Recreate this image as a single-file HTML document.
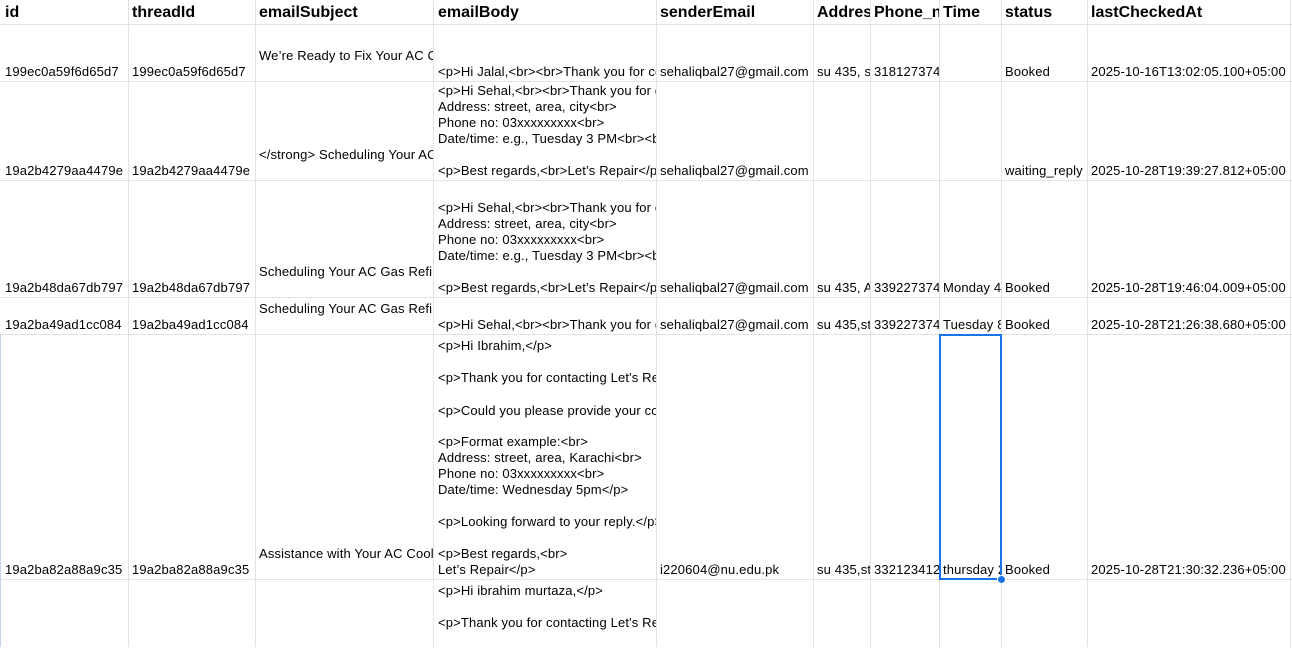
<!DOCTYPE html>
<html><head><meta charset="utf-8"><style>
*{margin:0;padding:0;box-sizing:border-box}
body{width:1292px;height:647px;background:#fff;position:relative;overflow:hidden;font-family:"Liberation Sans",Arial,sans-serif;color:#000}
.c{position:absolute;top:1px;height:647px;overflow:hidden}
.t{position:absolute;left:4px;white-space:pre;font-size:13px;line-height:16px;letter-spacing:0.15px}
.h{position:absolute;left:4px;top:2px;white-space:pre;font-size:16px;font-weight:bold;line-height:20px}
.v{position:absolute;top:0;width:1px;height:647px;background:#e2e2e2}
.r{position:absolute;left:0;width:1292px;height:1px;background:#e2e2e2}
</style></head><body>
<div class="r" style="top:24px"></div>
<div class="r" style="top:81px"></div>
<div class="r" style="top:180px"></div>
<div class="r" style="top:297px"></div>
<div class="r" style="top:334px"></div>
<div class="r" style="top:579px"></div>
<div class="v" style="left:0;top:334px;height:313px;background:#c6d4f0"></div>
<div class="v" style="left:128px"></div>
<div class="v" style="left:255px"></div>
<div class="v" style="left:433px"></div>
<div class="v" style="left:656px"></div>
<div class="v" style="left:813px"></div>
<div class="v" style="left:870px"></div>
<div class="v" style="left:939px"></div>
<div class="v" style="left:1001px"></div>
<div class="v" style="left:1087px"></div>
<div class="v" style="left:1290px"></div>

<div class="c" style="left:1px;width:127px">
<div class="h">id</div>
<div class="t" style="top:63px">199ec0a59f6d65d7</div>
<div class="t" style="top:162px">19a2b4279aa4479e</div>
<div class="t" style="top:279px">19a2b48da67db797</div>
<div class="t" style="top:316px">19a2ba49ad1cc084</div>
<div class="t" style="top:561px">19a2ba82a88a9c35</div>
</div>
<div class="c" style="left:128px;width:127px">
<div class="h">threadId</div>
<div class="t" style="top:63px">199ec0a59f6d65d7</div>
<div class="t" style="top:162px">19a2b4279aa4479e</div>
<div class="t" style="top:279px">19a2b48da67db797</div>
<div class="t" style="top:316px">19a2ba49ad1cc084</div>
<div class="t" style="top:561px">19a2ba82a88a9c35</div>
</div>
<div class="c" style="left:255px;width:178px">
<div class="h">emailSubject</div>
<div class="t" style="top:47px">We’re Ready to Fix Your AC Cooling</div>
<div class="t" style="top:146px">&lt;/strong&gt; Scheduling Your AC Gas</div>
<div class="t" style="top:263px">Scheduling Your AC Gas Refill</div>
<div class="t" style="top:300px">Scheduling Your AC Gas Refill</div>
<div class="t" style="top:545px">Assistance with Your AC Cooling</div>
</div>
<div class="c" style="left:434px;width:222px">
<div class="h">emailBody</div>
<div class="t" style="top:63px">&lt;p&gt;Hi Jalal,&lt;br&gt;&lt;br&gt;Thank you for contacting</div>
<div class="t" style="top:82px">&lt;p&gt;Hi Sehal,&lt;br&gt;&lt;br&gt;Thank you for contacting
Address: street, area, city&lt;br&gt;
Phone no: 03xxxxxxxxx&lt;br&gt;
Date/time: e.g., Tuesday 3 PM&lt;br&gt;&lt;br&gt;

&lt;p&gt;Best regards,&lt;br&gt;Let’s Repair&lt;/p&gt;</div>
<div class="t" style="top:199px">&lt;p&gt;Hi Sehal,&lt;br&gt;&lt;br&gt;Thank you for contacting
Address: street, area, city&lt;br&gt;
Phone no: 03xxxxxxxxx&lt;br&gt;
Date/time: e.g., Tuesday 3 PM&lt;br&gt;&lt;br&gt;

&lt;p&gt;Best regards,&lt;br&gt;Let’s Repair&lt;/p&gt;</div>
<div class="t" style="top:316px">&lt;p&gt;Hi Sehal,&lt;br&gt;&lt;br&gt;Thank you for contacting</div>
<div class="t" style="top:337px">&lt;p&gt;Hi Ibrahim,&lt;/p&gt;

&lt;p&gt;Thank you for contacting Let's Repair</div>
<div class="t" style="top:402px">&lt;p&gt;Could you please provide your contact</div>
<div class="t" style="top:433px">&lt;p&gt;Format example:&lt;br&gt;
Address: street, area, Karachi&lt;br&gt;
Phone no: 03xxxxxxxxx&lt;br&gt;
Date/time: Wednesday 5pm&lt;/p&gt;

&lt;p&gt;Looking forward to your reply.&lt;/p&gt;

&lt;p&gt;Best regards,&lt;br&gt;
Let’s Repair&lt;/p&gt;</div>
<div class="t" style="top:582px">&lt;p&gt;Hi ibrahim murtaza,&lt;/p&gt;

&lt;p&gt;Thank you for contacting Let's Repair</div>
</div>
<div class="c" style="left:656px;width:157px">
<div class="h">senderEmail</div>
<div class="t" style="top:63px">sehaliqbal27@gmail.com</div>
<div class="t" style="top:162px">sehaliqbal27@gmail.com</div>
<div class="t" style="top:279px">sehaliqbal27@gmail.com</div>
<div class="t" style="top:316px">sehaliqbal27@gmail.com</div>
<div class="t" style="top:561px">i220604@nu.edu.pk</div>
</div>
<div class="c" style="left:813px;width:57px">
<div class="h">Address</div>
<div class="t" style="top:63px">su 435, street</div>
<div class="t" style="top:279px">su 435, Area</div>
<div class="t" style="top:316px">su 435,street</div>
<div class="t" style="top:561px">su 435,street</div>
</div>
<div class="c" style="left:870px;width:69px">
<div class="h">Phone_no</div>
<div class="t" style="top:63px">3181273745</div>
<div class="t" style="top:279px">3392273745</div>
<div class="t" style="top:316px">3392273745</div>
<div class="t" style="top:561px">3321234123</div>
</div>
<div class="c" style="left:939px;width:62px">
<div class="h">Time</div>
<div class="t" style="top:279px">Monday 4pm</div>
<div class="t" style="top:316px">Tuesday 8pm</div>
<div class="t" style="top:561px">thursday 2pm</div>
</div>
<div class="c" style="left:1001px;width:86px">
<div class="h">status</div>
<div class="t" style="top:63px">Booked</div>
<div class="t" style="top:162px">waiting_reply</div>
<div class="t" style="top:279px">Booked</div>
<div class="t" style="top:316px">Booked</div>
<div class="t" style="top:561px">Booked</div>
</div>
<div class="c" style="left:1087px;width:203px">
<div class="h">lastCheckedAt</div>
<div class="t" style="top:63px">2025-10-16T13:02:05.100+05:00</div>
<div class="t" style="top:162px">2025-10-28T19:39:27.812+05:00</div>
<div class="t" style="top:279px">2025-10-28T19:46:04.009+05:00</div>
<div class="t" style="top:316px">2025-10-28T21:26:38.680+05:00</div>
<div class="t" style="top:561px">2025-10-28T21:30:32.236+05:00</div>
</div>

<div style="position:absolute;left:939px;top:334px;width:63px;height:246px;border:2px solid #1a73e8"></div>
<div style="position:absolute;left:997px;top:575px;width:9px;height:9px;border-radius:50%;background:#1a73e8;border:1px solid #fff"></div>
</body></html>
